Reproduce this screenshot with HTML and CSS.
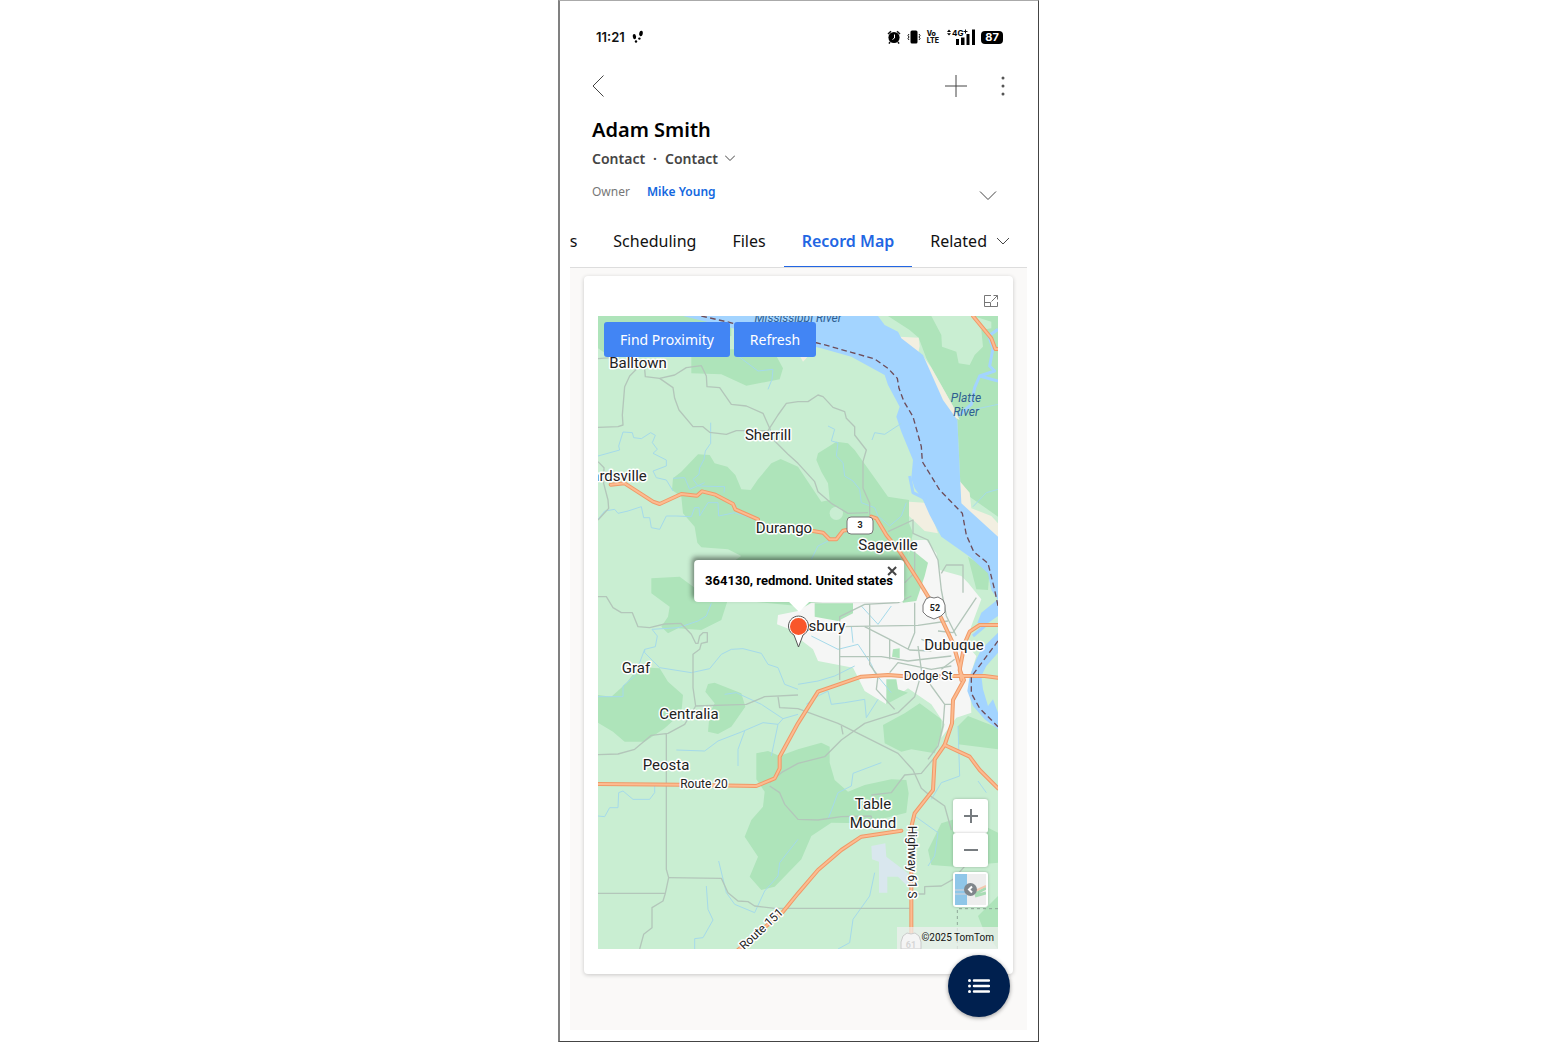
FILE: index.html
```html
<!DOCTYPE html>
<html lang="en">

<head>
    <meta charset="utf-8">
    <title>Adam Smith - Record Map</title>
    <link rel="stylesheet" href="styles.css">
</head>

<body>
    <div class="phone">
        <div class="status">
            <span class="time">11:21</span>
            <svg class="steps" width="12" height="14" viewBox="0 0 12 14">
                <ellipse cx="2.500" cy="6.500" rx="1.600" ry="2.600" transform="rotate(-12 3 7)"/>
                <circle cx="4" cy="11.500" r="1.200"/>
                <ellipse cx="9" cy="3.500" rx="1.800" ry="2.800" transform="rotate(14 9 3.5)"/>
                <circle cx="7.400" cy="8.600" r="1.200"/>
            </svg>
            <div class="statusIcons">
                <svg width="14" height="14" viewBox="0 0 14 14">
                    <circle cx="7" cy="7.500" r="5.600"/>
                    <path d="M1 4 L4 1.2 M13 4 L10 1.2 M3 12 L2 13.6 M11 12 L12 13.6" stroke="#111" stroke-width="1.5"/>
                    <path d="M7.5 4.5 V8 L5.5 9.5" stroke="#fff" fill="none"/>
                </svg>
                <svg width="14" height="14" viewBox="0 0 14 14">
                    <rect x="3.5" y="0.5" width="7" height="13" rx="1.5"/>
                    <path d="M2 4 L1 5.5 L2 7 L1 8.5 L2 10 M12 4 L13 5.5 L12 7 L13 8.5 L12 10" stroke="#111" fill="none"/>
                </svg>
                <span class="volte">Vo<br>LTE</span>
                <svg class="signal" width="28" height="16" viewBox="0 0 28 16">
                    <path d="M0 3 L2 0.6 L4 3 Z M0 4.2 L2 6.6 L4 4.2 Z"/>
                    <text x="5" y="7">4G</text>
                    <path d="M16.500 2.500 H20.500 M18.500 0.500 V4.500" stroke="#111"/>
                    <path d="M9 10 H12 V16 H9 Z M14 8.500 H17.500 V16 H14 Z M19.500 5 H22.500 V16 H19.500 Z M25 0.500 H28 V16 H25 Z"/>
                </svg>
                <span class="battery">87</span>
            </div>
        </div>

        <header class="header">
            <div class="navBar">
                <button class="iconBtn" aria-label="Back">
                    <svg width="12" height="22" viewBox="0 0 12 22"><path d="M11.500 0.500 L1 11 L11.500 21.500"/></svg>
                </button>
                <span class="navRight">
                    <button class="iconBtn" aria-label="New">
                        <svg width="22" height="22" viewBox="0 0 22 22"><path d="M11 0 V22 M0 11 H22"/></svg>
                    </button>
                    <button class="iconBtn" aria-label="More">
                        <svg class="dots" width="4" height="20" viewBox="0 0 4 20"><circle cx="2" cy="2" r="1.500"/><circle cx="2" cy="10" r="1.500"/><circle cx="2" cy="18" r="1.500"/></svg>
                    </button>
                </span>
            </div>
            <h1>Adam Smith</h1>
            <div class="subTitle">
                <span>Contact</span>
                <span>·</span>
                <button class="formPicker">Contact
                    <svg width="10" height="6" viewBox="0 0 10 6"><path d="M0 0.500 L5 5.500 L10 0.500"/></svg>
                </button>
            </div>
            <div class="owner">
                <span>Owner</span>
                <a href="#">Mike Young</a>
                <button class="iconBtn expand" aria-label="Expand header">
                    <svg width="18" height="10" viewBox="0 0 18 10"><path d="M1 0.500 L9 8.500 L17 0.500"/></svg>
                </button>
            </div>
        </header>

        <nav class="tabs">
            <a href="#">s</a>
            <a href="#">Scheduling</a>
            <a href="#">Files</a>
            <a href="#" class="active">Record Map</a>
            <a href="#">Related
                <svg width="12" height="8" viewBox="0 0 12 8"><path d="M0 1 L6 7 L12 1"/></svg>
            </a>
        </nav>

        <main class="panel">
            <section class="card">
                <div class="cardTop">
                    <button class="iconBtn" aria-label="Open full size">
                        <svg width="14" height="12" viewBox="0 0 14 12"><path d="M7 0.500 H0.500 V11.500 H13.500 V7 M0.500 7.500 H6.500 V11.500 M7.500 6.500 L13.500 0.500 M9.500 0.500 H13.500 V4.500"/></svg>
                    </button>
                </div>
                <div class="map">
                    <svg class="mapArt" viewBox="0 0 400 633" preserveAspectRatio="xMidYMid slice">
                        <svg width="400" height="633" viewBox="0 0 1200 1899">
                            <defs>
                                <g id="highways">
                                    <path d="M38 506 L80 502 L165 557 L185 564 L250 534 L297 539 L312 526 L352 536 L405 564 L412 580 L480 610 M645 645 L675 650 L695 670 H715 L735 644 L780 635 M820 602 L835 607 L865 657 L905 707 L960 792 L1030 907 L1065 982 L1085 1052 L1090 1092"/>
                                    <path d="M0 1404 L250 1406 L475 1410 L530 1387 L545 1357 V1322 L600 1222 L660 1127 L790 1082 L870 1077 L940 1082 L1060 1080 H1160 L1200 1085"/>
                                    <path d="M1200 927 H1145 L1115 947 L1100 982 L1085 1062 L1098 1092 L1065 1152 L1062 1222 L1040 1287 L1010 1330 L1005 1422 L950 1492 L940 1532 V1860"/>
                                    <path d="M1040 1287 L1115 1322 L1145 1362 L1200 1417 M910 1544 L790 1562 L730 1602 L660 1662 L600 1732 L555 1787 L420 1902 M1125 0 L1180 67 L1192 99 H1200"/>
                                </g>
                            </defs>
                            <!-- woods -->
                            <g class="woods">
                                <path d="M0 0 H270 L400 25 V60 L60 110 H20 L0 97 Z"/>
                                <path d="M280 100 V172 L370 175 L445 209 L545 190 L555 157 L535 120 L500 100 Z"/>
                                <path d="M870 0 H1200 V602 L1115 542 L1087 502 L1078 312 L1065 270 L985 127 L962 65 L935 42 Z"/>
                                <path d="M300 415 L335 417 L350 442 L388 452 L412 477 L430 520 L458 522 L480 490 L520 442 L548 429 L600 452 L640 512 L670 557 L695 552 L690 502 L670 467 L655 432 L660 412 L715 377 L750 382 L770 402 L820 472 L870 542 L933 552 V622 L945 650 L930 720 L940 860 L800 860 L600 870 L390 850 L370 912 L310 942 L240 937 L210 952 L190 932 L210 902 L215 872 L160 832 V787 L245 782 L290 815 L430 720 L390 700 L310 694 L298 680 L290 632 L255 592 L250 542 L222 522 L225 487 L250 467 Z"/>
                                <path d="M1110 722 L1175 762 L1170 822 L1135 820 Z"/>
                                <path d="M120 1054 L185 1057 L210 1097 L255 1137 L250 1192 L200 1237 L140 1277 H80 L45 1247 L0 1220 V1137 L40 1142 L85 1102 Z"/>
                                <path d="M330 1104 L350 1100 L430 1132 L442 1172 L400 1232 L360 1254 L330 1247 L335 1192 L350 1162 L322 1127 Z"/>
                                <path d="M855 1227 L920 1192 L965 1162 L1030 1210 V1250 L1010 1312 L940 1300 L910 1307 L860 1282 Z"/>
                                <path d="M475 1312 L510 1305 L545 1320 L600 1300 L670 1280 L695 1292 V1340 L710 1392 L750 1427 L800 1407 L880 1390 L925 1392 L932 1432 L925 1490 L800 1522 L700 1520 L640 1560 L610 1630 L530 1712 L490 1722 L455 1682 L480 1622 L440 1562 L460 1512 L495 1472 L500 1427 L475 1390 Z"/>
                                <path d="M1080 1230 L1110 1200 L1200 1235 V1300 L1080 1285 Z"/>
                                <path d="M1030 1522 L1100 1500 L1200 1550 V1640 L1070 1652 L1000 1647 L990 1602 Z"/>
                                <path d="M1140 1800 L1200 1740 V1899 L1160 1850 Z"/>
                            </g>
                            <g class="land">
                                <path d="M1000 0 L1030 57 L1032 92 L1075 107 L1082 142 L1115 147 L1130 117 L1155 92 L1150 42 L1180 37 V17 L1125 0 Z"/>
                                <circle cx="715" cy="592" r="20"/>
                            </g>
                            <!-- town -->
                            <path class="town" d="M600 885 L640 860 L800 850 L900 800 L935 760 L945 672 L985 672 L1015 712 L1025 762 L1090 780 L1110 800 L1150 850 L1120 930 L1105 985 L1135 1020 L1115 1085 L1120 1190 L1075 1205 L1030 1265 L1040 1225 L1000 1165 L930 1117 L865 1165 L800 1125 L775 1075 L765 1055 L660 1035 L645 1000 L600 965 L575 940 L537 925 L540 897 Z"/>
                            <g class="woods">
                                <path d="M650 862 H765 V892 L720 915 L650 902 Z"/>
                                <path d="M885 1000 L905 997 V1027 L882 1022 Z"/>
                                <path d="M880 800 L940 700 L990 740 L980 780 L955 855 L915 860 Z"/>
                                <path d="M865 1090 L895 1090 L900 1120 L930 1130 L865 1165 Z"/>
                            </g>
                            <!-- sand and airport -->
                            <g class="sand">
                                <path d="M905 62 L962 65 L965 90 L960 115 L975 120 L1000 155 L1065 270 L1085 312 L1045 290 L940 120 Z"/>
                                <path d="M1085 495 L1115 530 L1120 577 L1180 600 L1200 622 V670 L1090 570 Z"/>
                                <path d="M933 557 L980 560 L1000 595 L1020 652 L980 645 L933 600 Z"/>
                                <path d="M600 110 L640 110 L615 137 Z"/>
                            </g>
                            <path class="airport" d="M820 1590 L862 1582 L865 1622 L930 1672 V1712 L900 1682 H868 V1730 H843 V1637 L822 1630 Z"/>
                            <!-- water -->
                            <g class="water">
                                <path d="M255 0 L405 37 L670 97 L760 122 L860 177 L870 207 L905 272 L895 302 L910 347 L945 432 L940 487 L950 517 L975 552 L995 597 L1030 662 L1115 722 L1170 772 L1180 822 L1200 852 V662 L1090 562 L1087 502 L1078 312 L1035 252 L975 117 L910 67 L900 47 L860 27 L840 0 Z"/>
                                <path d="M1200 850 L1150 890 L1138 920 L1165 925 L1200 900 Z"/>
                                <path d="M1200 950 L1150 1000 L1135 1030 L1115 1080 L1108 1125 L1125 1170 L1160 1210 L1200 1240 V1190 L1185 1150 L1170 1170 L1155 1120 L1150 1080 L1165 1050 L1200 1010 Z"/>
                            </g>
                            <path class="creek" d="M1185 97 L1175 150 L1190 165 L1145 180 L1130 215 L1120 265 L1080 300 M1145 180 L1200 195 M1185 97 L1172 60 L1200 40 M1125 960 L1160 930 M935 480 L945 530 L985 550"/>
                            <g class="streams">
                                <path d="M0 420 L65 402 L62 390 L75 348 L103 350 L107 365 L130 368 L158 350 L172 358 L163 380 L178 400 L165 412 L205 432 V450 L165 465 L175 485 L205 492 L225 525"/>
                                <path d="M338 320 V382 L322 405 L318 430 L305 455 L303 475 L285 490 L300 510 L380 512 L378 530"/>
                                <path d="M225 487 L260 485 L275 520 L320 500"/>
                                <path d="M0 610 L20 585 L50 580 L60 592 L90 585 L130 572 L137 605 L155 605 L160 635 L185 640 L205 600 L235 600 L280 602 L290 575 L303 575 L305 600 L330 560 L360 560 L362 600 L410 590 L470 610"/>
                                <path d="M420 120 L480 165 L525 160 L522 190 L510 220"/>
                                <path d="M690 330 L710 340 L700 375 L720 380 L715 420 L735 440 L740 480 L765 495 L785 520 L790 560 L830 575 L840 600 L875 630 L910 600 L925 560"/>
                                <path d="M822 372 L830 350 L860 355 L910 322 M640 730 L660 690 L740 650"/>
                                <path d="M162 940 L178 960 L172 992 L140 1000 V1010 L185 1055 L280 1070 L335 1058 L370 1015 L400 1000 L435 998 L490 1012 L510 1045 L540 1055 L560 1105 L600 1120"/>
                                <path d="M140 1000 L110 1080 L75 1110 V1142 H0 M162 940 L240 935 L300 915 L325 900 L340 862"/>
                                <path d="M380 1135 L415 1130 L490 1165 L555 1208 L540 1225 L495 1220 L430 1248 L360 1275 L320 1305 L235 1302 M440 1245 L420 1300 V1350 M555 1208 L600 1195 M540 1225 L520 1320"/>
                                <path d="M0 1500 L20 1502 L35 1475 H60 L62 1430 L75 1425 L105 1450 L155 1450 L170 1430 V1410"/>
                                <path d="M362 1635 L385 1730 L410 1765 L470 1790 L500 1725 L540 1680 L545 1640 L600 1570 M325 1710 L330 1780 L345 1812 L315 1865 L290 1868 V1899"/>
                                <path d="M600 1105 L660 1095 L710 1080 L770 1050 M625 1165 L660 1140 L690 1125 L700 1165 L740 1160 L800 1150 L805 1205 L840 1150"/>
                                <path d="M640 960 L720 1000 L780 985 L820 1045 L830 1070 L880 1130 M760 930 L765 980 M790 870 L840 925 L880 870"/>
                                <path d="M690 1510 L720 1430 L760 1410 L765 1372 L850 1340 M720 1899 L755 1880 L765 1810 L815 1740 L830 1670"/>
                                <path d="M950 1500 L1020 1550 L1010 1620 L990 1650 M1000 1450 L1030 1400 L1085 1380 L1080 1230 M1140 1395 L1165 1430"/>
                                <path d="M1200 520 L1165 530 L1125 572 M1080 300 L1130 280 L1200 265"/>
                            </g>
                            <!-- local roads -->
                            <g class="roads">
                                <path d="M140 160 L142 182 L185 187 L230 177 L265 155 L310 149 L325 180 L327 212 L365 215 L400 265 L445 270 L495 292 L515 337 L530 375 L570 415 L600 442 L650 497 L660 527 L700 562 L750 592 L810 590"/>
                                <path d="M115 160 L95 180 L80 212 L73 297 L75 327 L60 332 L0 334 M0 128 L40 125"/>
                                <path d="M185 187 L225 215 L230 247 L243 282 L285 332 H315 L335 349 L385 355 L415 344 H510 L540 297 L565 262 L600 257 L630 257 L660 237 L675 242 L705 274 L740 287 L745 307 L770 332 V357 L805 402 L795 437 V517 L815 562 V597"/>
                                <path d="M0 437 L18 455 L17 502 L30 552 L32 577 L0 612"/>
                                <path d="M0 842 H25 L45 875 L70 890 H103 L120 932 L155 935 L200 924 L248 922 L280 955 L293 982 H300 L305 960 L315 950 H328 V978 L310 982 L305 1000 L285 1015 V1115 L293 1170 L445 1165 L500 1142 L600 1137"/>
                                <path d="M540 1142 L545 1175 L600 1178 L720 1222 L800 1262 L900 1312 L945 1362 L970 1417 L1000 1442 L1040 1470 L1060 1542"/>
                                <path d="M293 1170 L260 1225 L210 1252 L160 1258 L110 1300 L60 1314 L0 1316 M205 1252 V1660 L212 1685 L202 1732 H0 M202 1732 L195 1755 L162 1775 V1835 L137 1855 L125 1899"/>
                                <path d="M212 1685 L370 1687 L390 1730 L420 1755 L450 1757 L470 1770 L530 1777 H935 M960 1734 H980 V1712 L1030 1710 L1065 1690 L1110 1640"/>
                                <path d="M515 1410 L545 1430 L560 1465 L600 1510 L660 1512 L730 1502 L820 1500 M820 1437 L880 1430 L920 1377 L970 1372 L1005 1330 M820 1500 V1530"/>
                                <path d="M515 1400 L550 1370 L600 1342 L680 1322 L730 1272 L800 1222 L900 1190 L950 1142 L965 1090 M730 1230 L735 1255"/>
                                <path d="M725 1092 V902 L800 865 L900 860 L940 840 M725 932 L960 928 L1050 915 M725 1022 L850 1022 L930 1035 L1060 1020 M815 865 V1045 L840 1080 L835 1120 L890 1180"/>
                                <path d="M875 970 V1030 M800 932 L875 970 L935 1002 L1000 1005 M950 860 V950 L930 1000 M960 990 L970 1060 L1000 1110 L1040 1165 H1065 M875 1070 L900 1040 L1000 1060 L1060 1050 M970 970 L1060 1000 M1135 845 L1065 950 L1020 945"/>
                                <path d="M1040 1165 L1035 1230 L1020 1290 L990 1330 M870 647 L945 612 V652 L990 672 L1020 732 L1030 822 L1045 900 L1075 960 M1030 772 L1045 747 H1095 V830 M950 680 V770 L920 800 M1030 1060 L1070 1030"/>
                            </g>
                            <use href="#highways" class="highwayEdge"/>
                            <use href="#highways" class="highwayFill"/>
                            <!-- state and county lines -->
                            <path class="border" d="M310 0 L415 24 L675 85 L760 109 L830 129 L870 157 L898 187 L903 217 L918 257 L945 302 L970 392 L973 437 L1025 522 L1093 592 L1105 657 L1127 707 L1170 742 L1190 822 L1200 870 M1200 975 L1150 1042 L1120 1082 V1132 L1145 1177 L1200 1232"/>
                            <path class="county" d="M1078 1899 V1778 H1200"/>
                        </svg>

                        <!-- route shields -->
                        <g class="shields">
                            <rect x="249" y="201" width="26" height="17" rx="4"/>
                            <path d="M328 283 L332 281 L336 282 L340 281 L345 284 L347 289 L347 296 L343 300 L336 303 L329 300 L325 296 L325 289 Z"/>
                            <path d="M305 620 L309 617 L313 618 L317 617 L321 620 L323 626 V633 H303 V626 Z"/>
                            <text x="262" y="212">3</text>
                            <text x="337" y="295">52</text>
                            <text class="fadedText" x="313" y="632">61</text>
                        </g>

                        <g class="places">
                            <text x="40" y="52">Balltown</text>
                            <text x="170" y="124">Sherrill</text>
                            <text x="21" y="165">ardsville</text>
                            <text x="186" y="217">Durango</text>
                            <text x="290" y="234">Sageville</text>
                            <text x="224" y="315">Asbury</text>
                            <text x="38" y="357">Graf</text>
                            <text x="356" y="334">Dubuque</text>
                            <text x="91" y="403">Centralia</text>
                            <text x="68" y="454">Peosta</text>
                            <text x="275" y="493">Table</text>
                            <text x="275" y="512">Mound</text>
                        </g>
                        <g class="streets">
                            <text x="106" y="472">Route 20</text>
                            <text x="330" y="364">Dodge St</text>
                            <text transform="translate(166 616) rotate(-43)">Route 151</text>
                            <text transform="translate(310 546) rotate(90)">Highway 61 S</text>
                        </g>
                        <g class="rivers">
                            <text x="200" y="6">Mississippi River</text>
                            <text x="368" y="86">Platte</text>
                            <text x="368" y="100">River</text>
                        </g>
                        <path class="pin" d="M200.500 331 L196 319 A10 10 0 1 1 205 319 Z"/>
                        <circle class="pinDot" cx="200.500" cy="310.500" r="8.500"/>
                    </svg>

                    <div class="mapButtons">
                        <button>Find Proximity</button>
                        <button>Refresh</button>
                    </div>

                    <div class="popup">
                        364130, redmond. United states
                        <button class="close" aria-label="Close">
                            <svg width="10" height="10" viewBox="0 0 10 10"><path d="M1 1 L9 9 M9 1 L1 9"/></svg>
                        </button>
                    </div>

                    <div class="mapControls">
                        <button aria-label="Zoom in">
                            <svg width="14" height="14" viewBox="0 0 14 14"><path d="M7 0 V14 M0 7 H14"/></svg>
                        </button>
                        <button aria-label="Zoom out">
                            <svg width="14" height="14" viewBox="0 0 14 14"><path d="M0 7 H14"/></svg>
                        </button>
                        <button class="styleBtn" aria-label="Map style">
                            <svg width="31" height="31" viewBox="0 0 31 31">
                                <rect width="31" height="31" fill="#eee"/>
                                <rect width="12" height="31" fill="#8fc6e8"/>
                                <path d="M0 16 H12 M0 20 H12" stroke="#b5cde0"/>
                                <path d="M20 20 L31 14 M20 22 L31 19" stroke="#a8dcb4" stroke-width="3"/>
                                <path d="M18 18 L31 12" stroke="#f3c9b0" stroke-width="2"/>
                                <circle cx="15.500" cy="15.500" r="6.500" fill="#80868b"/>
                                <path d="M17 12.500 L14 15.500 L17 18.500" stroke="#fff" stroke-width="2" fill="none"/>
                            </svg>
                        </button>
                    </div>

                    <div class="credit">©2025 TomTom</div>
                </div>
            </section>
            <button class="fab" aria-label="Menu">
                <svg width="22" height="14" viewBox="0 0 22 14">
                    <circle cx="1.500" cy="1.500" r="1.500"/><circle cx="1.500" cy="7" r="1.500"/><circle cx="1.500" cy="12.500" r="1.500"/>
                    <path d="M6 1.500 H21 M6 7 H21 M6 12.500 H21" stroke="#fff" stroke-width="2.500" stroke-linecap="round"/>
                </svg>
            </button>
        </main>
    </div>
</body>

</html>
```

FILE: styles.css
```css
* {
    box-sizing: border-box;
}

body {
    margin: 0;
    padding-left: 39px;
    background: #fff;
    font-family: "Noto Sans", "Open Sans", sans-serif;
    color: #111;
}

button {
    font-family: inherit;
    border: 0;
    padding: 0;
    background: none;
}

a {
    color: inherit;
    text-decoration: none;
}

svg {
    display: block;
}

.phone {
    display: flex;
    flex-direction: column;
    max-width: 481px;
    min-height: 100vh;
    margin: 0 auto;
    padding: 24px 11px 11px 10px;
    border: 1px solid #444;
    border-top-color: #aaa;
    border-left: 2px solid #808080;
}

/* status bar */

.status {
    display: flex;
    align-items: center;
    height: 24px;
    padding: 0 24px 0 26px;
    font-family: Inter, sans-serif;
}

.time {
    font-size: 13px;
    font-weight: 600;
}

.steps {
    margin-left: 7px;
}

.statusIcons {
    display: flex;
    align-items: center;
    gap: 6px;
    margin-left: auto;
}

.volte {
    font-size: 7px;
    line-height: 7px;
    font-weight: 800;
}

.signal {
    margin-left: 2px;
}

.signal text {
    font: 700 8px Inter, sans-serif;
}

.battery {
    width: 22px;
    border-radius: 4px;
    background: #000;
    color: #fff;
    font-size: 11px;
    line-height: 13px;
    font-weight: 700;
    text-align: center;
}

/* record header */

.header {
    padding: 17px 22px 12px;
}

.iconBtn svg,
.formPicker svg,
.tabs svg {
    fill: none;
    stroke: #444;
}

.navBar,
.navRight,
.subTitle,
.owner {
    display: flex;
    align-items: center;
}

.navBar {
    justify-content: space-between;
    height: 40px;
}

.navRight {
    gap: 34px;
}

.iconBtn .dots {
    fill: #555;
    stroke: none;
}

h1 {
    margin: 8px 0 0;
    font-size: 20px;
    line-height: 32px;
    font-weight: 600;
    color: #000;
}

.subTitle {
    gap: 8px;
    height: 24px;
    font-size: 14px;
    font-weight: 600;
    color: #444;
}

.formPicker {
    display: flex;
    align-items: center;
    gap: 7px;
    font-size: 14px;
    font-weight: 600;
    color: #444;
}

.owner {
    height: 24px;
    margin-top: 9px;
    gap: 17px;
    font-size: 12px;
    color: #777;
}

.owner a {
    font-weight: 600;
    color: #1267e0;
}

.expand {
    margin: 10px 8px 0 auto;
}

/* tabs */

.tabs {
    display: flex;
    justify-content: flex-end;
    overflow: hidden;
    height: 53px;
    border-bottom: 1px solid #ddd;
    font-size: 16px;
    line-height: 52px;
}

.tabs a {
    display: flex;
    align-items: center;
    flex-shrink: 0;
    gap: 10px;
    padding: 0 18px;
}

.tabs .active {
    box-shadow: inset 0 -1px #2266e3;
    font-weight: 600;
    color: #2266e3;
}

/* map card */

.panel {
    position: relative;
    display: flex;
    flex: 1;
    padding: 8px 14px 56px;
    background: #faf9f8;
}

.card {
    display: flex;
    flex: 1;
    flex-direction: column;
    padding: 0 15px 25px 14px;
    border-radius: 4px;
    background: #fff;
    box-shadow: 0 1px 4px rgba(0, 0, 0, 0.2);
}

.cardTop {
    display: flex;
    justify-content: flex-end;
    align-items: center;
    height: 40px;
    padding-top: 9px;
}

.cardTop svg {
    stroke: #777;
}

.map {
    position: relative;
    flex: 1;
    min-height: 400px;
    overflow: hidden;
    background: #c9eed2;
    font-family: Roboto, sans-serif;
}

.mapArt {
    position: absolute;
    width: 100%;
    height: 100%;
}

.mapArt path {
    stroke-linejoin: round;
}

.woods {
    fill: #aee4ba;
}

.land {
    fill: #c9eed2;
}

.town {
    fill: #f5f6f5;
}

.sand {
    fill: #f2efe1;
}

.airport {
    fill: #d9e7ee;
}

.water {
    fill: #a3d4ff;
}

.creek {
    fill: none;
    stroke: #a3d4ff;
    stroke-width: 9;
}

.streams {
    fill: none;
    stroke: #a5daea;
    stroke-width: 3;
}

.roads {
    fill: none;
    stroke: #b3c6ba;
    stroke-width: 4;
}

.highwayEdge {
    fill: none;
    stroke: #ef9a68;
    stroke-width: 12;
    stroke-linecap: round;
}

.highwayFill {
    fill: none;
    stroke: #fdbb90;
    stroke-width: 6;
    stroke-linecap: round;
}

.border {
    fill: none;
    stroke: #6e4d5a;
    stroke-width: 4;
    stroke-dasharray: 17 10;
}

.county {
    fill: none;
    stroke: #8fa898;
    stroke-width: 3;
    stroke-dasharray: 9 9;
}

.mapArt text {
    text-anchor: middle;
    paint-order: stroke;
    stroke: #fff;
    stroke-width: 3px;
    stroke-linejoin: round;
    fill: #222;
}

.places {
    font-size: 15px;
}

.streets {
    font-size: 12px;
}

.mapArt .rivers text {
    font-size: 12px;
    font-style: italic;
    fill: #2f5f91;
    stroke: none;
}

.shields {
    fill: #fff;
    stroke: #777;
}

.mapArt .shields text {
    font-size: 9px;
    font-weight: 700;
    stroke: none;
}

.mapArt .shields .fadedText {
    fill: #999;
}

.pin {
    fill: #fff;
    stroke: #555;
}

.pinDot {
    fill: #f9562a;
}

.mapButtons {
    position: absolute;
    top: 6px;
    left: 6px;
    display: flex;
    gap: 4px;
}

.mapButtons button {
    height: 35px;
    padding: 0 16px;
    border-radius: 3px;
    background: #4285f4;
    color: #fff;
    font: 14px "Noto Sans", sans-serif;
}

.popup {
    position: absolute;
    top: 244px;
    left: 50%;
    transform: translateX(-50%);
    margin-left: 1px;
    padding: 0 11px;
    border-radius: 4px;
    background: #fff;
    box-shadow: -2px -3px 5px rgba(0, 0, 0, 0.45);
    color: #000;
    font-size: 13px;
    line-height: 42px;
    font-weight: 700;
    white-space: nowrap;
}

.popup::after {
    content: "";
    position: absolute;
    top: 100%;
    left: 50%;
    margin-left: -10px;
    border: 10px solid transparent;
    border-top-color: #fff;
}

.close {
    position: absolute;
    top: 0;
    right: 0;
    padding: 6px 7px;
}

.close svg {
    stroke: #444;
    stroke-width: 2;
}

.mapControls {
    position: absolute;
    right: 10px;
    bottom: 42px;
}

.mapControls button {
    display: flex;
    align-items: center;
    justify-content: center;
    width: 35px;
    height: 34px;
    border-radius: 3px;
    background: #fff;
    box-shadow: 0 0 3px rgba(0, 0, 0, 0.25);
    stroke: #777c80;
    stroke-width: 2;
}

.mapControls .styleBtn {
    height: 35px;
    margin-top: 5px;
    stroke: none;
}

.credit {
    position: absolute;
    right: 0;
    bottom: 0;
    padding: 0 4px 0 24px;
    background: rgba(240, 240, 240, 0.7);
    font-size: 10px;
    line-height: 22px;
}

/* floating menu button */

.fab {
    position: absolute;
    right: 17px;
    bottom: 13px;
    display: flex;
    align-items: center;
    justify-content: center;
    width: 62px;
    height: 62px;
    border-radius: 50%;
    background: #00204f;
    box-shadow: 0 1px 4px rgba(0, 0, 0, 0.4);
}

.fab svg {
    fill: #fff;
}
```
